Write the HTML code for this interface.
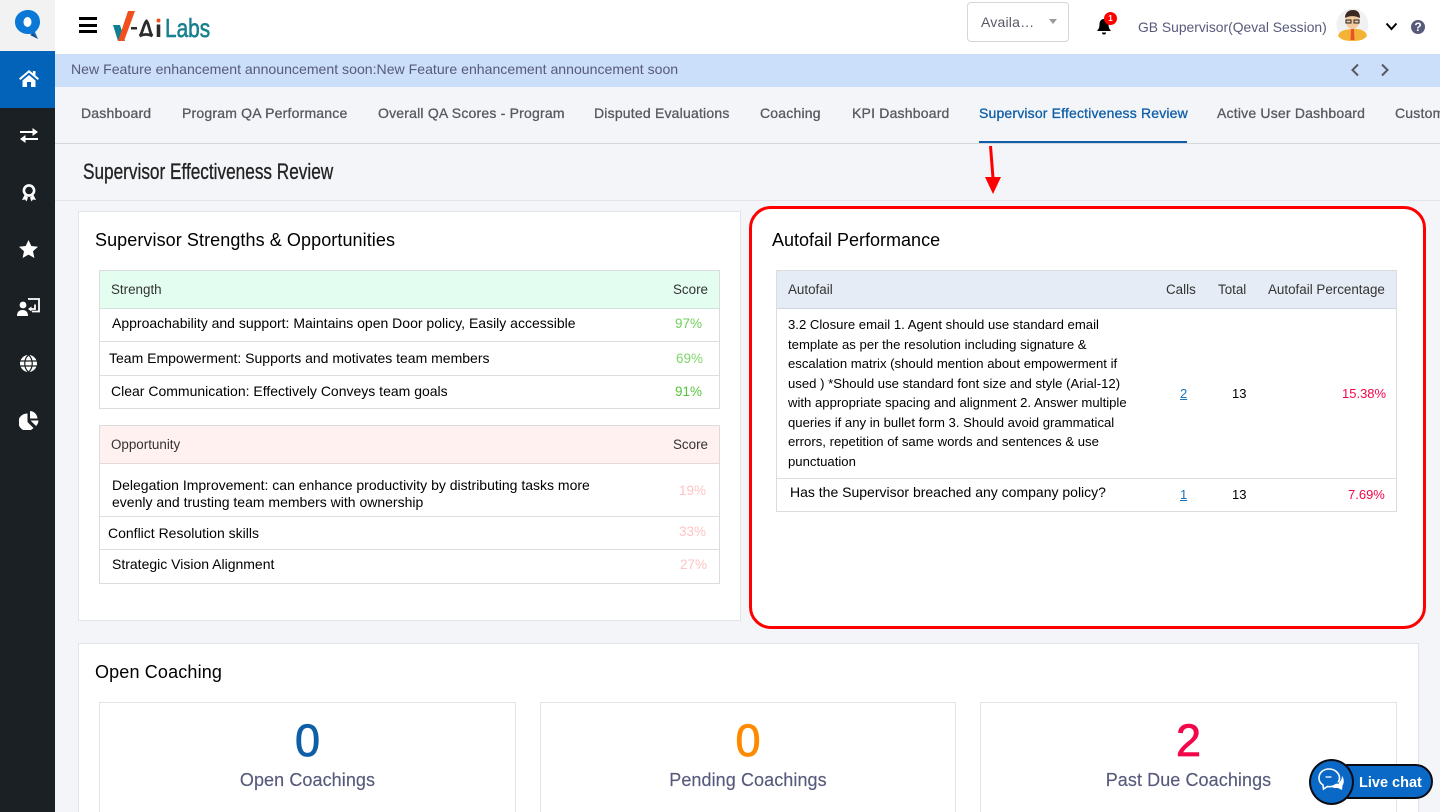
<!DOCTYPE html>
<html><head><meta charset="utf-8"><style>
html,body{margin:0;padding:0;width:1440px;height:812px;overflow:hidden;background:#f4f5f8;font-family:"Liberation Sans",sans-serif}
#w{position:relative;width:1440px;height:812px;overflow:hidden;background:#f4f5f8}
.a{position:absolute;white-space:nowrap}
svg{position:absolute;display:block}
.tab{position:absolute;top:105px;font-size:14px;line-height:16px;color:#575962;white-space:nowrap;letter-spacing:.2px;-webkit-text-stroke:.3px #575962}
.card{position:absolute;background:#fff;border:1px solid #e2e4ea;box-sizing:border-box}
.h{font-size:18px;line-height:20px;color:#000}
.box{position:absolute;box-sizing:border-box;border:1px solid #dcdcdc}
.t{font-size:13px;line-height:17px;color:#000;position:absolute;white-space:nowrap}
.s{font-size:13.5px}
.th{font-size:13.4px;line-height:16px;color:#333;position:absolute;white-space:nowrap}
.l{position:absolute;height:1px;background:#dedede}
.big{position:absolute;font-size:45px;line-height:50px;text-align:center;-webkit-text-stroke:.8px}
.cap{position:absolute;font-size:18px;line-height:22px;color:#575a7b;text-align:center;letter-spacing:.08px;-webkit-text-stroke:.15px #575a7b}
</style></head><body><div id="w">

<!-- sidebar -->
<div class="a" style="left:0;top:0;width:55px;height:812px;background:#1a2023"></div>
<div class="a" style="left:0;top:0;width:55px;height:51px;background:#f2f2f2"></div>
<div class="a" style="left:0;top:51px;width:55px;height:57px;background:#0263b8"></div>
<svg style="left:14px;top:9px" width="27" height="31" viewBox="0 0 27 31"><path d="M14 1C7 1 1 6 1 13c0 7 6 12 13 12 1 0 2 0 3-.3L24 30l-3-7c3-2.500 5-6 5-10C26 6 21 1 14 1z" fill="#0a78d6"/><ellipse cx="13.500" cy="13" rx="4" ry="5" fill="#fff"/><path d="M19 24l5 6-8-4z" fill="#1c4f80"/></svg>
<svg style="left:19px;top:70px" width="20" height="17" viewBox="0 0 20 17"><path d="M10 0L0 8.500l1.300 1.500L10 2.600 18.700 10 20 8.500 16.500 5.500V1h-2.600v2.300z" fill="#fff"/><path d="M3.500 10.500L10 5l6.500 5.500V17h-4.500v-5H8v5H3.500z" fill="#fff"/></svg>
<svg style="left:20px;top:128px" width="18" height="15" viewBox="0 0 18 15"><path d="M0 4h13M5 11h13" stroke="#fff" stroke-width="1.900" fill="none"/><path d="M12.500 0l5.500 4-5.500 4zM5.500 7L0 11l5.500 4z" fill="#fff"/></svg>
<svg style="left:22px;top:184px" width="14" height="18" viewBox="0 0 14 18"><circle cx="7" cy="6.500" r="5.100" fill="none" stroke="#fff" stroke-width="2.600"/><path d="M2.500 11L0 16l3-.5 1.500 2L6 13.500zM11.500 11L14 16l-3-.5-1.500 2L8 13.500z" fill="#fff"/></svg>
<svg style="left:19px;top:240px" width="19" height="18" viewBox="0 0 19 18"><path d="M9.500 0l2.800 6 6.700.8-5 4.500 1.400 6.700-5.900-3.400L3.600 18 5 11.300 0 6.800 6.700 6z" fill="#fff"/></svg>
<svg style="left:17px;top:297px" width="23" height="20" viewBox="0 0 23 20"><path d="M11 2h11v12.500h-7" fill="none" stroke="#fff" stroke-width="1.800"/><circle cx="6" cy="8" r="3.400" fill="#fff"/><path d="M0 19c0-4 2-6 5.500-6s5.500 2 5.500 6z" fill="#fff"/><path d="M13 12h5V7.500" fill="none" stroke="#fff" stroke-width="1.800"/><path d="M11 12l3.500-2.500v5z" fill="#fff"/></svg>
<svg style="left:20px;top:355px" width="17" height="17" viewBox="0 0 17 17"><circle cx="8.500" cy="8.500" r="8.500" fill="#fff"/><path d="M0 6h17M0 11h17M8.500 0c-5 4-5 13 0 17M8.500 0c5 4 5 13 0 17" stroke="#1a2023" stroke-width="1.200" fill="none"/></svg>
<svg style="left:19px;top:411px" width="20" height="19" viewBox="0 0 20 19"><path d="M8.500 2.500v8.500l6 6A8.700 8.700 0 1 1 8.500 2.500z" fill="#fff"/><path d="M11 0a8 8 0 0 1 7.500 7.500H11z" fill="#fff"/><path d="M11.500 9.500H19.500a8 8 0 0 1-2.500 5.500z" fill="#fff"/></svg>

<!-- top bar -->
<div class="a" style="left:55px;top:0;width:1385px;height:54px;background:#fff"></div>
<div class="a" style="left:79px;top:17px;width:18px;height:3px;background:#000"></div>
<div class="a" style="left:79px;top:24px;width:18px;height:3px;background:#000"></div>
<div class="a" style="left:79px;top:30px;width:18px;height:3px;background:#000"></div>
<svg style="left:112px;top:10px" width="34" height="32" viewBox="0 0 34 32"><path d="M1 15h7l5 16H6z" fill="#0f7f93"/><path d="M6 31L16 1h7L12 31z" fill="#f0501e"/><rect x="19" y="17" width="6" height="2.500" fill="#2b2b2b"/></svg>
<svg style="left:138px;top:15px" width="24" height="24" viewBox="0 0 24 24"><path d="M1.500 21C4 20 6 8 8.500 6c2.500 2 3 13 6 15-4-2-9-2-13 0z" fill="none" stroke="#2b2b2b" stroke-width="2.800"/><path d="M20.500 9.500V22" stroke="#2b2b2b" stroke-width="3.600"/><circle cx="20.500" cy="5.500" r="2" fill="#f0501e"/></svg>
<div class="a" style="left:165px;top:13px;font-size:26px;line-height:30px;color:#17808f;transform:scaleX(.8);transform-origin:left;-webkit-text-stroke:.6px #17808f">Labs</div>

<div class="a" style="left:967px;top:2px;width:102px;height:40px;box-sizing:border-box;border:1px solid #d5d6dc;border-radius:4px;background:#fff"></div>
<div class="a" style="left:981px;top:14px;font-size:14px;line-height:16px;color:#575962;letter-spacing:.2px">Availa…</div>
<div class="a" style="left:1049px;top:19px;width:0;height:0;border:4px solid transparent;border-top:5px solid #9a9a9a"></div>
<svg style="left:1097px;top:18px" width="14" height="17" viewBox="0 0 14 17"><path d="M7 1c-3 0-4.500 2.500-4.500 5 0 4-1 5-2.500 7h14c-1.500-2-2.500-3-2.500-7 0-2.500-1.500-5-4.500-5z" fill="#000"/><path d="M5 14.500h4a2 2 0 0 1-4 0z" fill="#000"/></svg>
<div class="a" style="left:1104px;top:12px;width:13px;height:13px;border-radius:50%;background:#f00;color:#fff;font-size:8px;font-weight:bold;line-height:13px;text-align:center">1</div>
<div class="a" style="left:1138px;top:19px;font-size:14px;line-height:16px;color:#575a7b;transform:scaleX(.99);transform-origin:left">GB Supervisor(Qeval Session)</div>
<svg style="left:1336px;top:8px" width="33" height="33" viewBox="0 0 33 33"><circle cx="16.500" cy="16.500" r="16" fill="#f1f1f1"/><path d="M2 28c1-5 6-6.500 14.500-7S30 23 31 28c-3 4-8 5-14.500 5S5 32 2 28z" fill="#f5b335"/><path d="M15 21h3l.5 11h-4z" fill="#e8522a"/><ellipse cx="16.500" cy="13" rx="7" ry="8" fill="#f5c9a0"/><path d="M9 10c0-6 4-8 8-8s7 2 7 8c-4-2-10-3-15 0z" fill="#3a2a20"/><path d="M10 12h5v3h-5zM18 12h5v3h-5z" fill="none" stroke="#222" stroke-width="1"/></svg>
<svg style="left:1385px;top:22px" width="13" height="9" viewBox="0 0 13 9"><path d="M1.500 1.500L6.500 7l5-5.500" fill="none" stroke="#000" stroke-width="2"/></svg>
<div class="a" style="left:1411px;top:20px;width:14px;height:14px;border-radius:50%;background:#575a7b;color:#fff;font-size:12px;font-weight:bold;line-height:14px;text-align:center">?</div>

<!-- announcement -->
<div class="a" style="left:55px;top:54px;width:1385px;height:33px;background:#cbdffb"></div>
<div class="a" style="left:71px;top:61px;font-size:14px;line-height:16px;color:#575a7b;transform:scaleX(1.0066);transform-origin:left">New Feature enhancement announcement soon:New Feature enhancement announcement soon</div>
<svg style="left:1350px;top:63px" width="10" height="14" viewBox="0 0 10 14"><path d="M8 1.500L2.500 7 8 12.500" fill="none" stroke="#575962" stroke-width="2"/></svg>
<svg style="left:1380px;top:63px" width="10" height="14" viewBox="0 0 10 14"><path d="M2 1.500L7.500 7 2 12.500" fill="none" stroke="#575962" stroke-width="2"/></svg>

<!-- tabs -->
<div class="a" style="left:55px;top:143px;width:1385px;height:1px;background:#d5d7dd"></div>
<div class="tab" style="left:81px">Dashboard</div>
<div class="tab" style="left:182px">Program QA Performance</div>
<div class="tab" style="left:378px">Overall QA Scores - Program</div>
<div class="tab" style="left:594px">Disputed Evaluations</div>
<div class="tab" style="left:760px">Coaching</div>
<div class="tab" style="left:852px">KPI Dashboard</div>
<div class="tab" style="left:979px;color:#0f5fa8;letter-spacing:.17px;-webkit-text-stroke:.3px #0f5fa8">Supervisor Effectiveness Review</div>
<div class="a" style="left:979px;top:141px;width:208px;height:2px;background:#0f5fa8"></div>
<div class="tab" style="left:1217px">Active User Dashboard</div>
<div class="tab" style="left:1395px">Custom</div>

<div class="a" style="left:83px;top:159px;font-size:22px;line-height:26px;color:#222;transform:scaleX(.782);transform-origin:left;-webkit-text-stroke:.3px #222">Supervisor Effectiveness Review</div>
<div class="a" style="left:55px;top:200px;width:1385px;height:1px;background:#e4e5ea"></div>

<!-- left card -->
<div class="card" style="left:78px;top:211px;width:663px;height:410px"></div>
<div class="a h" style="left:95px;top:230px;letter-spacing:.08px">Supervisor Strengths &amp; Opportunities</div>

<div class="box" style="left:99px;top:270px;width:621px;height:139px"></div>
<div class="a" style="left:100px;top:271px;width:619px;height:37px;background:#e4fdf1"></div>
<div class="l" style="left:100px;top:308px;width:619px;background:#cfe5da"></div>
<div class="th" style="left:111px;top:282px">Strength</div>
<div class="th" style="left:673px;top:282px">Score</div>
<div class="t" style="left:112px;top:315px;font-size:14px">Approachability and support: Maintains open Door policy, Easily accessible</div>
<div class="t s" style="left:675px;top:315px;color:#6fd05c">97%</div>
<div class="l" style="left:100px;top:341px;width:619px"></div>
<div class="t" style="left:109px;top:350px;font-size:14px">Team Empowerment: Supports and motivates team members</div>
<div class="t s" style="left:676px;top:350px;color:#7ed56b">69%</div>
<div class="l" style="left:100px;top:375px;width:619px"></div>
<div class="t" style="left:111px;top:383px;font-size:14px">Clear Communication: Effectively Conveys team goals</div>
<div class="t s" style="left:675px;top:383px;color:#57c53c">91%</div>

<div class="box" style="left:99px;top:425px;width:621px;height:159px"></div>
<div class="a" style="left:100px;top:426px;width:619px;height:37px;background:#fff1ef"></div>
<div class="l" style="left:100px;top:463px;width:619px;background:#e8d8d6"></div>
<div class="th" style="left:111px;top:437px">Opportunity</div>
<div class="th" style="left:673px;top:437px">Score</div>
<div class="t" style="left:112px;top:477px;font-size:14px">Delegation Improvement: can enhance productivity by distributing tasks more</div>
<div class="t" style="left:112px;top:494px;font-size:14px">evenly and trusting team members with ownership</div>
<div class="t s" style="left:679px;top:482px;color:#ffc4c4">19%</div>
<div class="l" style="left:100px;top:516px;width:619px"></div>
<div class="t" style="left:108px;top:525px;font-size:14px">Conflict Resolution skills</div>
<div class="t s" style="left:679px;top:523px;color:#ffc4c4">33%</div>
<div class="l" style="left:100px;top:549px;width:619px"></div>
<div class="t" style="left:112px;top:556px;font-size:14px">Strategic Vision Alignment</div>
<div class="t s" style="left:680px;top:556px;color:#ffc4c4">27%</div>

<!-- right card -->
<div class="a" style="left:749px;top:206px;width:677px;height:423px;box-sizing:border-box;background:#fff;border:3px solid #f00;border-radius:22px"></div>
<div class="a h" style="left:772px;top:230px">Autofail Performance</div>

<div class="box" style="left:776px;top:270px;width:621px;height:242px"></div>
<div class="a" style="left:777px;top:271px;width:619px;height:37px;background:#e5ecf5"></div>
<div class="l" style="left:777px;top:308px;width:619px;background:#d0d6de"></div>
<div class="th" style="left:788px;top:282px">Autofail</div>
<div class="th" style="left:1166px;top:282px">Calls</div>
<div class="th" style="left:1218px;top:282px">Total</div>
<div class="th" style="left:1268px;top:282px">Autofail Percentage</div>
<div class="t" style="left:788px;top:315px;line-height:19.500px;transform:scaleX(1.01);transform-origin:left">3.2 Closure email 1. Agent should use standard email<br>template as per the resolution including signature &amp;<br>escalation matrix (should mention about empowerment if<br>used ) *Should use standard font size and style (Arial-12)<br>with appropriate spacing and alignment 2. Answer multiple<br>queries if any in bullet form 3. Should avoid grammatical<br>errors, repetition of same words and sentences &amp; use<br>punctuation</div>
<div class="t" style="left:1180px;top:385px;color:#1a73b8;text-decoration:underline">2</div>
<div class="t" style="left:1232px;top:385px">13</div>
<div class="t" style="left:1342px;top:385px;color:#f4064a">15.38%</div>
<div class="l" style="left:777px;top:478px;width:619px"></div>
<div class="t" style="left:790px;top:484px;font-size:14px">Has the Supervisor breached any company policy?</div>
<div class="t" style="left:1180px;top:486px;color:#1a73b8;text-decoration:underline">1</div>
<div class="t" style="left:1232px;top:486px">13</div>
<div class="t" style="left:1348px;top:486px;color:#f4064a">7.69%</div>

<!-- arrow -->
<svg style="left:980px;top:144px" width="26" height="52" viewBox="0 0 26 52"><path d="M10.500 2l2.500 32" stroke="#f00" stroke-width="3" fill="none"/><path d="M5 33h16l-8 17z" fill="#f00"/></svg>

<!-- open coaching -->
<div class="card" style="left:78px;top:643px;width:1341px;height:180px"></div>
<div class="a h" style="left:95px;top:662px;letter-spacing:.15px">Open Coaching</div>
<div class="box" style="left:99px;top:702px;width:417px;height:120px;border-color:#e4e4e4"></div>
<div class="box" style="left:540px;top:702px;width:416px;height:120px;border-color:#e4e4e4"></div>
<div class="box" style="left:980px;top:702px;width:417px;height:120px;border-color:#e4e4e4"></div>
<div class="big" style="left:99px;top:716px;width:417px;color:#0f5fa8">0</div>
<div class="big" style="left:540px;top:716px;width:416px;color:#ff8a00">0</div>
<div class="big" style="left:980px;top:716px;width:417px;color:#f4064a">2</div>
<div class="cap" style="left:99px;top:769px;width:417px">Open Coachings</div>
<div class="cap" style="left:540px;top:769px;width:416px">Pending Coachings</div>
<div class="cap" style="left:980px;top:769px;width:417px">Past Due Coachings</div>

<!-- live chat -->
<div class="a" style="left:1330px;top:764px;width:103px;height:35px;box-sizing:border-box;background:#0a69c6;border:2px solid #0c0c14;border-radius:18px;color:#fff;font-size:14.500px;font-weight:bold;line-height:34px;padding-left:27px">Live chat</div>
<div class="a" style="left:1309px;top:759px;width:45px;height:46px;box-sizing:border-box;background:#0a69c6;border:2px solid #0c0c14;border-radius:50%"></div>
<svg style="left:1317px;top:767px" width="30" height="30" viewBox="0 0 30 30"><path d="M12 2C6 2 2 6 2 11c0 3 1.500 5.500 4 7l.5 4 4-2.500c1 .2 1.500.2 2 .2 5.500 0 10-4 10-8.700S18 2 12 2z" fill="#0a69c6" stroke="#fff" stroke-width="1.600"/><path d="M8.500 10h6" stroke="#cfe2f7" stroke-width="1.600"/><path d="M25 9c2 2 2.500 7 .5 9.500L25 23l-4-2h-4l-4-2c6 0 12-4 12-10z" fill="#fff"/><path d="M17 16h5" stroke="#0a69c6" stroke-width="1.400"/></svg>
</div></body></html>
